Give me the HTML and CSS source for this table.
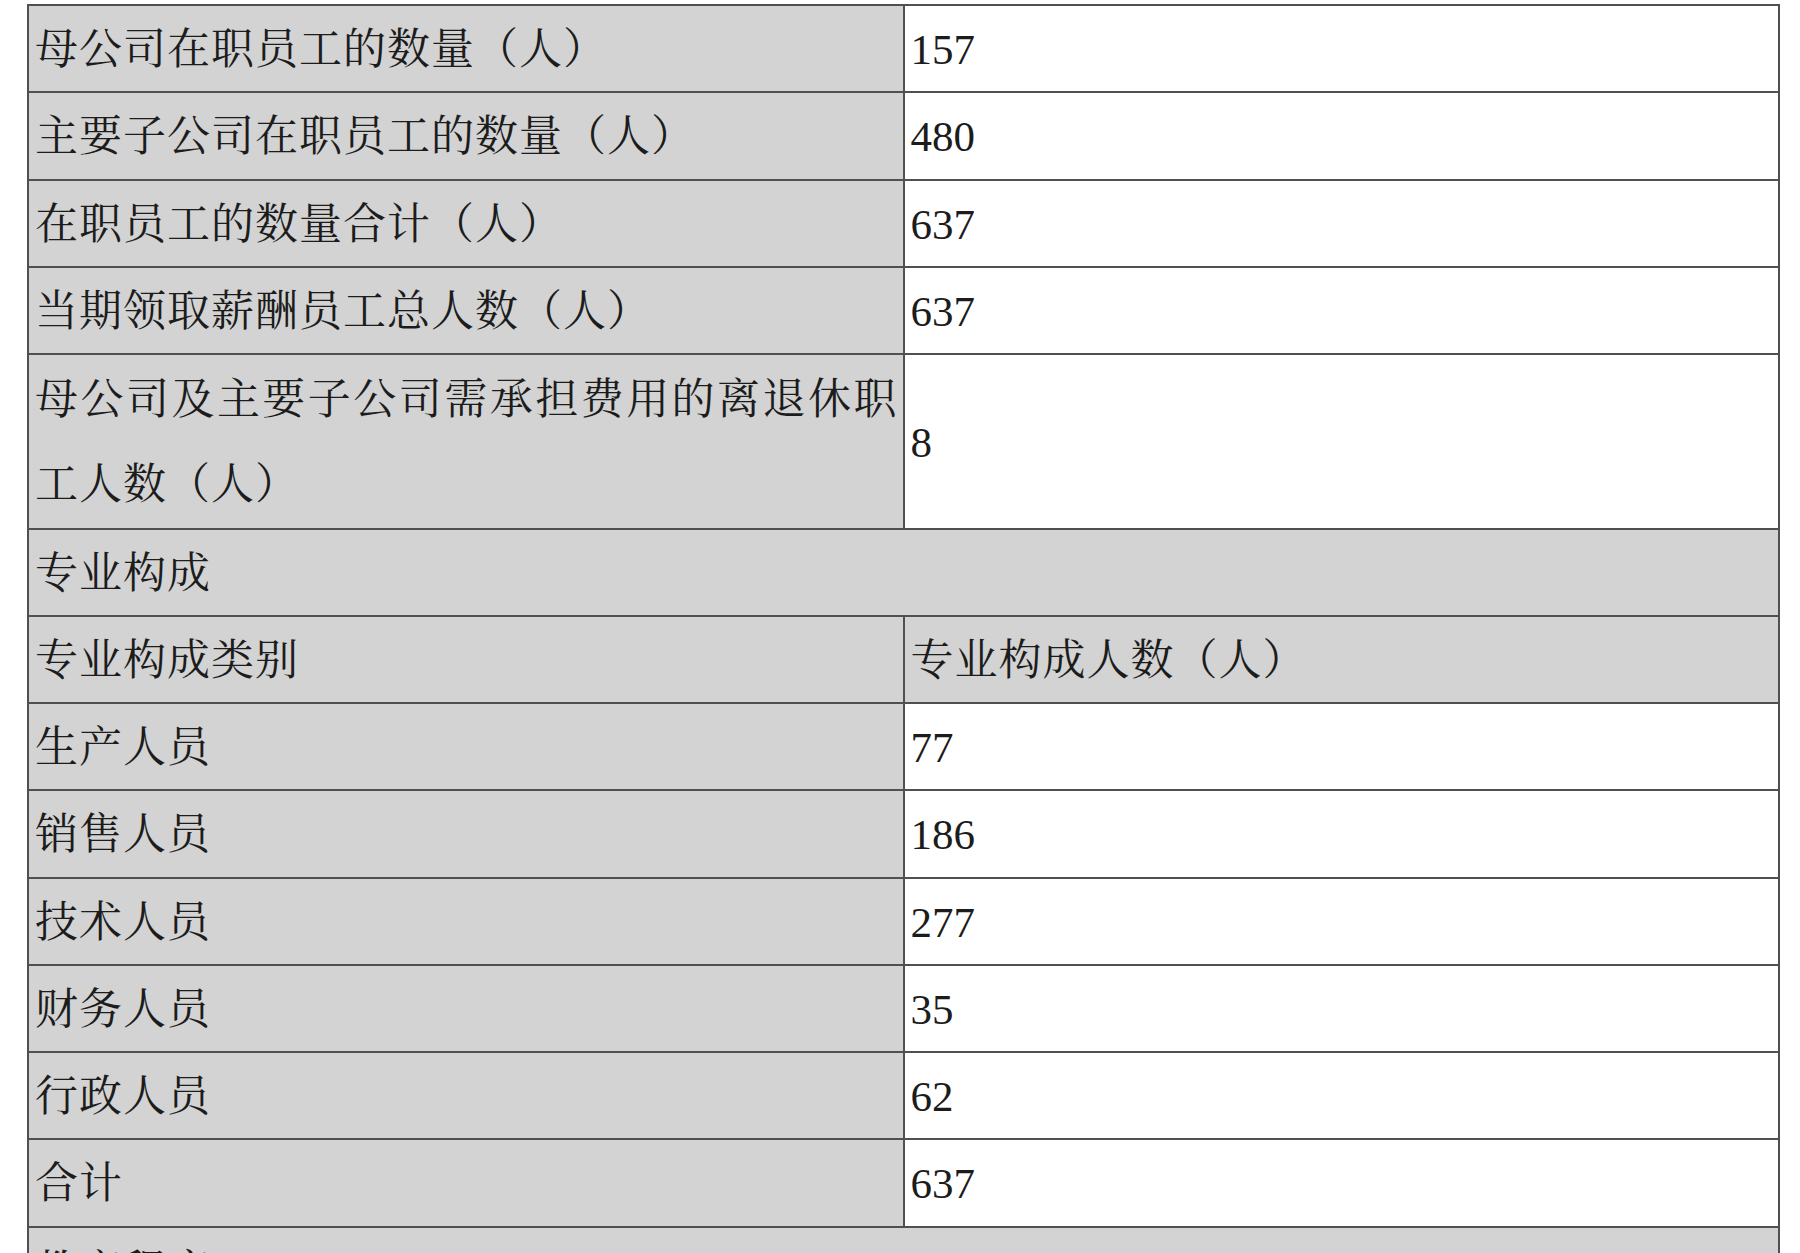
FILE: index.html
```html
<!DOCTYPE html>
<html lang="zh-CN">
<head>
<meta charset="utf-8">
<title>员工情况</title>
<link rel="stylesheet" href="styles.css">
</head>
<body>
<table class="staff">
  <colgroup><col class="c1"><col class="c2"></colgroup>
  <tbody>
    <tr><td class="label">母公司在职员工的数量（人）</td><td class="value">157</td></tr>
    <tr><td class="label">主要子公司在职员工的数量（人）</td><td class="value">480</td></tr>
    <tr><td class="label">在职员工的数量合计（人）</td><td class="value">637</td></tr>
    <tr><td class="label">当期领取薪酬员工总人数（人）</td><td class="value">637</td></tr>
    <tr><td class="label long">母公司及主要子公司需承担费用的离退休职工人数（人）</td><td class="value">8</td></tr>
    <tr><td class="label" colspan="2">专业构成</td></tr>
    <tr><td class="label">专业构成类别</td><td class="label">专业构成人数（人）</td></tr>
    <tr><td class="label">生产人员</td><td class="value">77</td></tr>
    <tr><td class="label">销售人员</td><td class="value">186</td></tr>
    <tr><td class="label">技术人员</td><td class="value">277</td></tr>
    <tr><td class="label">财务人员</td><td class="value">35</td></tr>
    <tr><td class="label">行政人员</td><td class="value">62</td></tr>
    <tr><td class="label">合计</td><td class="value">637</td></tr>
    <tr><td class="label" colspan="2">教育程度</td></tr>
  </tbody>
</table>
</body>
</html>
```
FILE: styles.css
```css
html, body {
  margin: 0;
  padding: 0;
  background: #ffffff;
}

body {
  font-family: "Liberation Serif", "Noto Serif CJK SC", "Noto Sans CJK SC", serif;
  font-size: 43px;
  color: #1c1c1c;
}

.staff {
  border-collapse: collapse;
  table-layout: fixed;
  width: 1753px;
  margin: 4px 0 0 27px;
}

.c1, .c2 {
  width: 50%;
}

.staff td {
  border: 2px solid #505050;
  padding: 3px 6px 0 6px;
  line-height: 82.25px;
  height: 82.25px;
  vertical-align: middle;
  white-space: nowrap;
  overflow: hidden;
}

.staff td.label {
  background: #d3d3d3;
  letter-spacing: 1px;
}

.staff td.value {
  background: #ffffff;
}

.staff td.long {
  white-space: normal;
  text-align: justify;
  line-height: 84.75px;
  padding-right: 5px;
}
```
